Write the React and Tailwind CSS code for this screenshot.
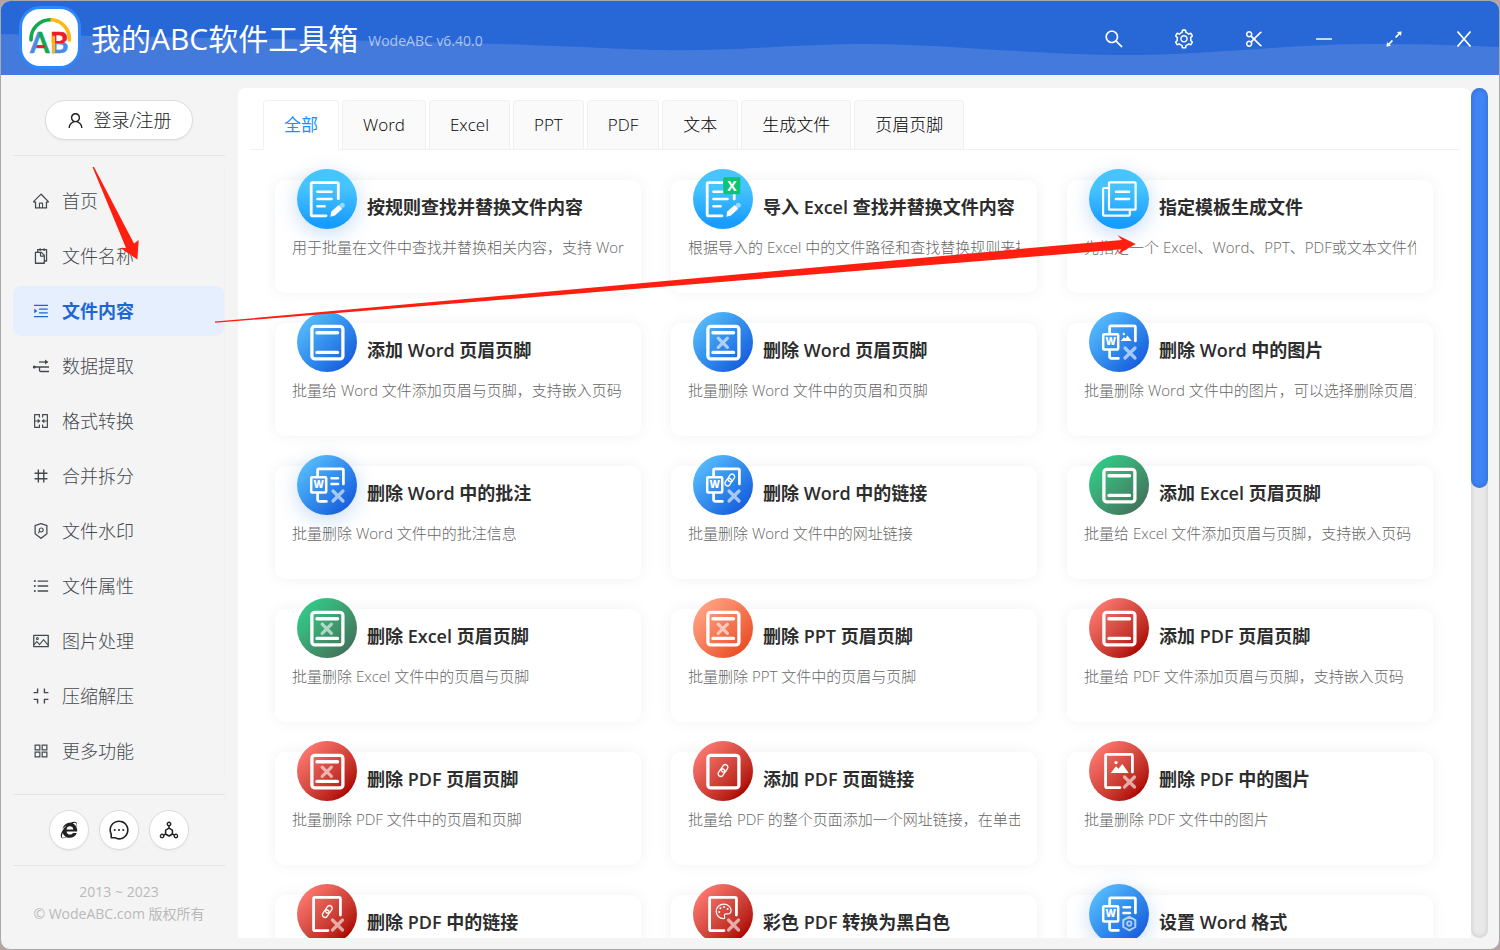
import React, { useState } from "react";
import {
  AiOutlineAppstore,
  AiOutlineArrowsAlt,
  AiOutlineCompress,
  AiOutlineDeploymentUnit,
  AiOutlineHome,
  AiOutlineIe,
  AiOutlineMenuUnfold,
  AiOutlineMergeCells,
  AiOutlineMessage,
  AiOutlineMinus,
  AiOutlineNumber,
  AiOutlinePicture,
  AiOutlineScissor,
  AiOutlineSearch,
  AiOutlineSecurityScan,
  AiOutlineSetting,
  AiOutlineSnippets,
  AiOutlineUnorderedList,
  AiOutlineUser,
} from "react-icons/ai";

function ExtractIcon() {
  return (
    <svg viewBox="0 0 18 18" width="18" height="18" fill="none" stroke="currentColor" strokeWidth="1.3">
      <path d="M7 5h8" />
      <path d="M13 2.6 16.4 5 13 7.400z" fill="currentColor" stroke="none" />
      <path d="M2 10h15M7.500 10v3.200q0 1.300 1.300 1.300H17" />
      <circle cx="2.300" cy="10" r="1.500" fill="currentColor" stroke="none" />
    </svg>
  );
}

function CloseIcon() {
  return (
    <svg viewBox="0 0 22 22" width="22" height="22" fill="none" stroke="currentColor" strokeWidth="1.8">
      <path d="M4.500 3.500l13 15M17.500 3.500l-13 15" />
    </svg>
  );
}

const menu = [
  { label: "首页", Icon: AiOutlineHome },
  { label: "文件名称", Icon: AiOutlineSnippets },
  { label: "文件内容", Icon: AiOutlineMenuUnfold },
  { label: "数据提取", Icon: ExtractIcon },
  { label: "格式转换", Icon: AiOutlineMergeCells },
  { label: "合并拆分", Icon: AiOutlineNumber },
  { label: "文件水印", Icon: AiOutlineSecurityScan },
  { label: "文件属性", Icon: AiOutlineUnorderedList },
  { label: "图片处理", Icon: AiOutlinePicture },
  { label: "压缩解压", Icon: AiOutlineCompress },
  { label: "更多功能", Icon: AiOutlineAppstore },
];

const windowActions = [
  { label: "搜索", Icon: AiOutlineSearch },
  { label: "设置", Icon: AiOutlineSetting },
  { label: "截图", Icon: AiOutlineScissor },
  { label: "最小化", Icon: AiOutlineMinus },
  { label: "最大化", Icon: AiOutlineArrowsAlt },
  { label: "关闭", Icon: CloseIcon },
];

const links = [
  { label: "官网", Icon: AiOutlineIe },
  { label: "反馈", Icon: AiOutlineMessage },
  { label: "社区", Icon: AiOutlineDeploymentUnit },
];

const tabs = ["全部", "Word", "Excel", "PPT", "PDF", "文本", "生成文件", "页眉页脚"];

const tones = {
  sky: "bg-linear-to-b from-[#46c4ff] from-30% to-[#169dff] to-90%",
  blue: "bg-linear-to-br from-[#54b8fb] from-15% to-[#1a60de] to-85%",
  green: "bg-linear-to-br from-[#2ec986] from-15% to-[#40705a] to-90%",
  orange: "bg-linear-to-br from-[#ff9f80] from-15% to-[#ea4f24] to-85%",
  red: "bg-linear-to-br from-[#ff7b74] from-10% to-[#ae0500] to-85%",
};

const Cross = ({ x, y, s = 5 }) => (
  <path
    d={`M${x - s} ${y - s}l${2 * s} ${2 * s}M${x + s} ${y - s}l${-2 * s} ${2 * s}`}
    strokeWidth="3.2"
    strokeOpacity="0.6"
  />
);

const Chain = ({ x, y }) => (
  <g transform={`translate(${x} ${y}) rotate(35)`} strokeWidth="1.300">
    <rect x="-2.600" y="-6.600" width="5.200" height="8" rx="2.600" />
    <rect x="-2.600" y="-1.400" width="5.200" height="8" rx="2.600" />
  </g>
);

const Lines = () => <path d="M34.500 23.300h6.500M34.500 29h6.500" strokeWidth="2.600" />;

const Pen = () => (
  <g stroke="none">
    <path d="M33.300 47.800l1-5.200 7.400-6.600 3.600 3.800-7.400 6.700z" fill="#fff" />
    <circle cx="45.300" cy="36.200" r="2.500" fill="#fff" fillOpacity="0.5" />
  </g>
);

const Sheet = () => (
  <path d="M43.400 31V14.800q0-1.400-1.400-1.400H18q-1.400 0-1.400 1.400v30.400q0 1.400 1.400 1.400h13" strokeWidth="2.800" />
);

const PageFrame = () => <rect x="14.900" y="14.300" width="31" height="32.600" rx="3" strokeWidth="3.300" />;

const PageBars = () => <path d="M20 20.800h20.500M20 40.400h20.500" strokeWidth="3.4" />;

const WordDoc = () => (
  <>
    <path d="M20.600 21V15.200q0-1.400 1.400-1.400h23q1.400 0 1.400 1.400V29M20.600 39v5.600q0 1.800 1.800 1.800h7" strokeWidth="2.700" />
    <rect x="14.200" y="22.200" width="15" height="15.400" rx="1" strokeWidth="2.500" />
    <text
      x="21.700"
      y="33.400"
      textAnchor="middle"
      fontSize="10"
      fontWeight="900"
      fontFamily="Open Sans, sans-serif"
      fill="#fff"
      stroke="none"
    >
      W
    </text>
  </>
);

const glyphs = {
  edit: (
    <>
      <path d="M41.300 29.700V15q0-1.400-1.400-1.400H15.600q-1.400 0-1.400 1.400v30.400q0 1.400 1.400 1.400H29" strokeWidth="2.800" />
      <path d="M20.500 22.700h14M20.500 30h14M20.500 37.300h7" strokeWidth="2.600" />
      <Pen />
    </>
  ),
  editExcel: (
    <>
      <path d="M29 13.600H15.600q-1.400 0-1.400 1.400v30.400q0 1.400 1.400 1.400H29M41.200 26v4" strokeWidth="2.800" />
      <path d="M20.500 22.700h9M20.500 30h14M20.500 37.300h7" strokeWidth="2.600" />
      <Pen />
      <rect x="30.300" y="8.300" width="17" height="17" rx="1" fill="#0bc573" stroke="none" />
      <text
        x="38.800"
        y="22"
        textAnchor="middle"
        fontSize="14"
        fontWeight="700"
        fontFamily="Open Sans, sans-serif"
        fill="#fff"
        stroke="none"
      >
        X
      </text>
    </>
  ),
  template: (
    <>
      <rect x="20" y="13.300" width="26.600" height="27.400" rx="0.800" strokeWidth="2.200" />
      <path d="M20 19h-4.800q-1.100 0-1.100 1.100v25.500q0 1.100 1.100 1.100h24.500q1.100 0 1.100-1.100V41" strokeWidth="2.200" />
      <path d="M27 22.700h13M27 30h13" strokeWidth="2.600" />
    </>
  ),
  frame: (
    <>
      <PageFrame />
      <PageBars />
    </>
  ),
  frameCross: (
    <>
      <PageFrame />
      <PageBars />
      <Cross x={29.800} y={30.700} s={4.600} />
    </>
  ),
  frameLink: (
    <>
      <PageFrame />
      <Chain x={30} y={29.500} />
    </>
  ),
  wordPicture: (
    <>
      <WordDoc />
      <path d="M31.700 29l3.200-3.800 1.500 1.400 2-3.200 4.300 5.600z" fill="#fff" stroke="none" />
      <circle cx="34.800" cy="22" r="1.200" fill="#fff" stroke="none" />
      <Cross x={41} y={41} />
    </>
  ),
  wordLines: (
    <>
      <WordDoc />
      <Lines />
      <Cross x={41} y={41} />
    </>
  ),
  wordLink: (
    <>
      <WordDoc />
      <Chain x={36.800} y={25} />
      <Cross x={41} y={41} />
    </>
  ),
  wordSetting: (
    <>
      <WordDoc />
      <Lines />
      <g strokeOpacity="0.650">
        <path d="M40.300 32.800l6 3.400v6.800l-6 3.400-6-3.400v-6.800z" strokeWidth="2" />
        <circle cx="40.300" cy="39.600" r="2.200" strokeWidth="1.800" />
      </g>
    </>
  ),
  pdfPicture: (
    <>
      <Sheet />
      <path d="M21.700 32l5.300-6.800 2.500 2.600 3.800-4.800 6.400 9z" fill="#fff" stroke="none" />
      <circle cx="27" cy="21.600" r="1.700" fill="#fff" stroke="none" />
      <Cross x={40.500} y={41} />
    </>
  ),
  pdfLink: (
    <>
      <Sheet />
      <Chain x={30.300} y={27.500} />
      <Cross x={40.500} y={41} />
    </>
  ),
  pdfPalette: (
    <>
      <Sheet />
      <path
        d="M30.700 34.600c-4.300 0-7.500-3.300-7.500-7.300s3.300-7.100 7.600-7.100 7.300 3 7.300 6.300c0 2.600-1.900 3.600-3.900 3.300-2-.3-3.200.6-2.700 2.200.4 1.300.3 2.600-.8 2.600z"
        strokeWidth="1.200"
      />
      <g fill="#fff" stroke="none">
        <circle cx="26.200" cy="28" r="1" />
        <circle cx="27.400" cy="24.300" r="1" />
        <circle cx="31" cy="22.900" r="1" />
        <circle cx="34.600" cy="24.900" r="1" />
      </g>
      <Cross x={40.500} y={41} />
    </>
  ),
};

const cards = [
  { title: "按规则查找并替换文件内容", desc: "用于批量在文件中查找并替换相关内容，支持 Word、Excel、PPT", tone: "sky", glyph: "edit", glow: true },
  { title: "导入 Excel 查找并替换文件内容", desc: "根据导入的 Excel 中的文件路径和查找替换规则来批量替换", tone: "sky", glyph: "editExcel" },
  { title: "指定模板生成文件", desc: "先指定一个 Excel、Word、PPT、PDF或文本文件作为模板", tone: "sky", glyph: "template", glow: true },
  { title: "添加 Word 页眉页脚", desc: "批量给 Word 文件添加页眉与页脚，支持嵌入页码", tone: "blue", glyph: "frame" },
  { title: "删除 Word 页眉页脚", desc: "批量删除 Word 文件中的页眉和页脚", tone: "blue", glyph: "frameCross" },
  { title: "删除 Word 中的图片", desc: "批量删除 Word 文件中的图片，可以选择删除页眉页脚中的图片", tone: "blue", glyph: "wordPicture" },
  { title: "删除 Word 中的批注", desc: "批量删除 Word 文件中的批注信息", tone: "blue", glyph: "wordLines", glow: true },
  { title: "删除 Word 中的链接", desc: "批量删除 Word 文件中的网址链接", tone: "blue", glyph: "wordLink" },
  { title: "添加 Excel 页眉页脚", desc: "批量给 Excel 文件添加页眉与页脚，支持嵌入页码", tone: "green", glyph: "frame" },
  { title: "删除 Excel 页眉页脚", desc: "批量删除 Excel 文件中的页眉与页脚", tone: "green", glyph: "frameCross" },
  { title: "删除 PPT 页眉页脚", desc: "批量删除 PPT 文件中的页眉与页脚", tone: "orange", glyph: "frameCross" },
  { title: "添加 PDF 页眉页脚", desc: "批量给 PDF 文件添加页眉与页脚，支持嵌入页码", tone: "red", glyph: "frame" },
  { title: "删除 PDF 页眉页脚", desc: "批量删除 PDF 文件中的页眉和页脚", tone: "red", glyph: "frameCross" },
  { title: "添加 PDF 页面链接", desc: "批量给 PDF 的整个页面添加一个网址链接，在单击页面时打开", tone: "red", glyph: "frameLink" },
  { title: "删除 PDF 中的图片", desc: "批量删除 PDF 文件中的图片", tone: "red", glyph: "pdfPicture" },
  { title: "删除 PDF 中的链接", desc: "批量删除 PDF 文件中的链接", tone: "red", glyph: "pdfLink" },
  { title: "彩色 PDF 转换为黑白色", desc: "批量将彩色 PDF 转换为黑白色", tone: "red", glyph: "pdfPalette" },
  { title: "设置 Word 格式", desc: "批量设置 Word 文件的格式", tone: "blue", glyph: "wordSetting", glow: true },
];

function Logo() {
  return (
    <svg viewBox="0 0 62 63" width="62" height="63" role="img" aria-label="WodeABC">
      <defs>
        <linearGradient id="letterA" x1="0" x2="1" y1="0" y2="0">
          <stop offset="0.500" stopColor="#4a8be8" />
          <stop offset="0.500" stopColor="#12a84b" />
        </linearGradient>
        <linearGradient id="letterB" x1="0" x2="0" y1="0" y2="1">
          <stop offset="0.540" stopColor="#ee1c25" />
          <stop offset="0.540" stopColor="#4a8be8" />
        </linearGradient>
      </defs>
      <rect width="62" height="63" rx="21" fill="#2f86f8" />
      <rect x="3" y="3" width="56" height="57" rx="18" fill="#fff" />
      <g fill="none" strokeWidth="3.600" strokeLinecap="round">
        <path d="M12 34A19.500 19.500 0 0 1 32 13.800" stroke="#12a84b" />
        <path d="M33 13.800A19.500 19.500 0 0 1 50.500 34" stroke="#fdb813" />
      </g>
      <g fontFamily="Lato, sans-serif" fontWeight="700" fontSize="28">
        <text x="11" y="47" fill="url(#letterA)" stroke="url(#letterA)" strokeWidth="0.600" strokeLinejoin="round">
          A
        </text>
        <text x="31" y="47" fill="url(#letterB)" stroke="url(#letterB)" strokeWidth="0.600" strokeLinejoin="round">
          B
        </text>
      </g>
      <path d="M34.600 31v15" stroke="#fdb813" strokeWidth="3" strokeLinecap="round" />
      <path d="M19 40.500h5.500" stroke="#ee1c25" strokeWidth="3" strokeLinecap="round" />
    </svg>
  );
}

function Header() {
  return (
    <header className="relative flex h-[74px] shrink-0 items-center bg-[#2867d6] pl-[18px] text-white">
      <svg
        className="absolute inset-0 h-full w-full"
        viewBox="0 0 1500 74"
        preserveAspectRatio="none"
        aria-hidden="true"
      >
        <path
          d="M0 33C180 37 380 39 500 43S640 50 700 49S800 43 870 43S1040 54 1125 54S1290 43 1370 43S1470 45 1500 46V74H0z"
          fill="#fff"
          fillOpacity="0.130"
        />
      </svg>
      <div className="relative flex flex-1 items-center">
        <div className="pb-0.5">
          <Logo />
        </div>
        <h1 className="ml-[10px] pt-0.5 text-[30px] leading-10 font-normal">我的ABC软件工具箱</h1>
        <span className="ml-[10px] pt-1.5 text-sm text-white/60">WodeABC v6.40.0</span>
      </div>
      <div className="relative flex pt-0.5">
        {windowActions.map(({ label, Icon }) => (
          <button key={label} type="button" aria-label={label} className="flex h-10 w-[70px] items-center justify-center">
            <Icon size={22} />
          </button>
        ))}
      </div>
    </header>
  );
}

function Sidebar() {
  const [active, setActive] = useState("文件内容");
  return (
    <aside className="flex w-[237px] shrink-0 flex-col pr-[13px] pl-3">
      <div className="flex justify-center border-b border-[#e4e4e4] pt-[25px] pb-[15px]">
        <button
          type="button"
          className="flex h-10 items-center gap-2 rounded-full border border-[#dcdcdc] bg-white px-5 text-lg font-light text-[#222] shadow-xs"
        >
          <AiOutlineUser size={19} />
          登录/注册
        </button>
      </div>
      <nav className="mt-[14px] flex flex-col gap-[5px] border-r border-[#efefef] pt-[6px]">
        {menu.map(({ label, Icon }) => (
          <button
            key={label}
            type="button"
            onClick={() => setActive(label)}
            className={
              label === active
                ? "flex h-[50px] items-center gap-3 rounded-lg bg-[#e6effd] pl-[19px] text-lg font-bold text-[#1e66d6]"
                : "flex h-[50px] items-center gap-3 rounded-lg pl-[19px] text-lg font-light text-[#44484e]"
            }
          >
            <Icon size={18} />
            {label}
          </button>
        ))}
      </nav>
      <div className="mt-[18px] flex justify-center gap-[10px] border-y border-[#e4e4e4] py-[15px]">
        {links.map(({ label, Icon }) => (
          <a
            key={label}
            href="#"
            aria-label={label}
            className="flex size-10 items-center justify-center rounded-full border border-[#dcdcdc] bg-white text-[#222] shadow-xs"
          >
            <Icon size={22} />
          </a>
        ))}
      </div>
      <footer className="pt-[15px] text-center text-sm leading-[22px] text-[#b9b9b9]">
        <p>2013 ~ 2023</p>
        <p className="whitespace-nowrap">© WodeABC.com 版权所有</p>
      </footer>
    </aside>
  );
}

function Card({ title, desc, tone, glyph, glow }) {
  return (
    <article className="h-[113px] min-w-0 rounded-[10px] bg-white px-[17px] shadow-[0_0_15px_rgba(0,0,0,0.06)]">
      <div className="flex items-center gap-[10px] pl-[5px]">
        <div
          className={`-mt-[11px] size-[60px] shrink-0 rounded-full ${tones[tone]} ${
            glow ? "shadow-[0_5px_20px_rgba(30,120,220,0.25)]" : ""
          }`}
        >
          <svg
            viewBox="0 0 60 60"
            width="60"
            height="60"
            fill="none"
            stroke="#fff"
            strokeLinecap="round"
            strokeLinejoin="round"
            aria-hidden="true"
          >
            {glyphs[glyph]}
          </svg>
        </div>
        <h3 className="pt-[5px] text-lg leading-7 font-semibold whitespace-nowrap text-[#2d2d2d]">{title}</h3>
      </div>
      <p className="mt-1 overflow-hidden text-[15px] leading-7 font-light whitespace-nowrap text-[#666]">{desc}</p>
    </article>
  );
}

function Content() {
  const [tab, setTab] = useState("全部");
  return (
    <main className="flex min-w-0 flex-1 pt-[13px] pr-[11px] pb-[11px]">
      <section className="flex min-w-0 flex-1 flex-col overflow-hidden rounded-t-lg bg-white pt-3">
        <div role="tablist" className="mx-3 flex shrink-0 gap-[3px] border-b border-[#f0f0f0] pl-[13px]">
          {tabs.map((name) => (
            <button
              key={name}
              type="button"
              role="tab"
              aria-selected={name === tab}
              onClick={() => setTab(name)}
              className={
                name === tab
                  ? "-mb-px h-[50px] rounded-t-sm border border-[#f0f0f0] border-b-white bg-white px-5 text-[17px] text-[#1890ff]"
                  : "h-[49px] rounded-t-sm border border-b-0 border-[#f0f0f0] bg-[#fafafa] px-5 text-[17px] font-light text-black"
              }
            >
              {name}
            </button>
          ))}
        </div>
        <div className="min-h-0 flex-1 overflow-y-auto pt-[30px] pr-[38px] pb-8 pl-[37px] [scrollbar-width:none]">
          <div className="grid grid-cols-3 gap-[30px]">
            {cards.map((card) => (
              <Card key={card.title} {...card} />
            ))}
          </div>
        </div>
      </section>
      <div className="w-[17px] shrink-0 rounded-full bg-[#e9e9e9] shadow-[inset_0_0_5px_rgba(0,0,0,0.15)]">
        <div className="h-[47%] rounded-full bg-[#3e84f5] shadow-[inset_0_0_5px_rgba(0,0,0,0.2)]" />
      </div>
    </main>
  );
}

function Arrows() {
  return (
    <svg className="pointer-events-none absolute top-0 left-0" width="1160" height="340" fill="#ff1f10" aria-hidden="true">
      <path d="M92.500 167l1.500 0L134 243.500l4.700-3.500L137.400 259.400 120.300 248l5.700 0z" />
      <path d="M215 321.600L1050 246.300l72-6.300-4.700-5L1135.700 244 1118.300 254l3-4.800L1050 255.300 640 288.500 215 322.800z" />
    </svg>
  );
}

export default function App() {
  return (
    <div className="relative h-screen overflow-hidden bg-[#b9a39f] font-['Open_Sans','Noto_Sans_CJK_SC',sans-serif]">
      <div className="flex h-full flex-col overflow-hidden rounded-[10px] border border-[#a9a9a9] bg-[#f4f4f4]">
        <Header />
        <div className="flex min-h-0 flex-1">
          <Sidebar />
          <Content />
        </div>
      </div>
      <Arrows />
    </div>
  );
}
